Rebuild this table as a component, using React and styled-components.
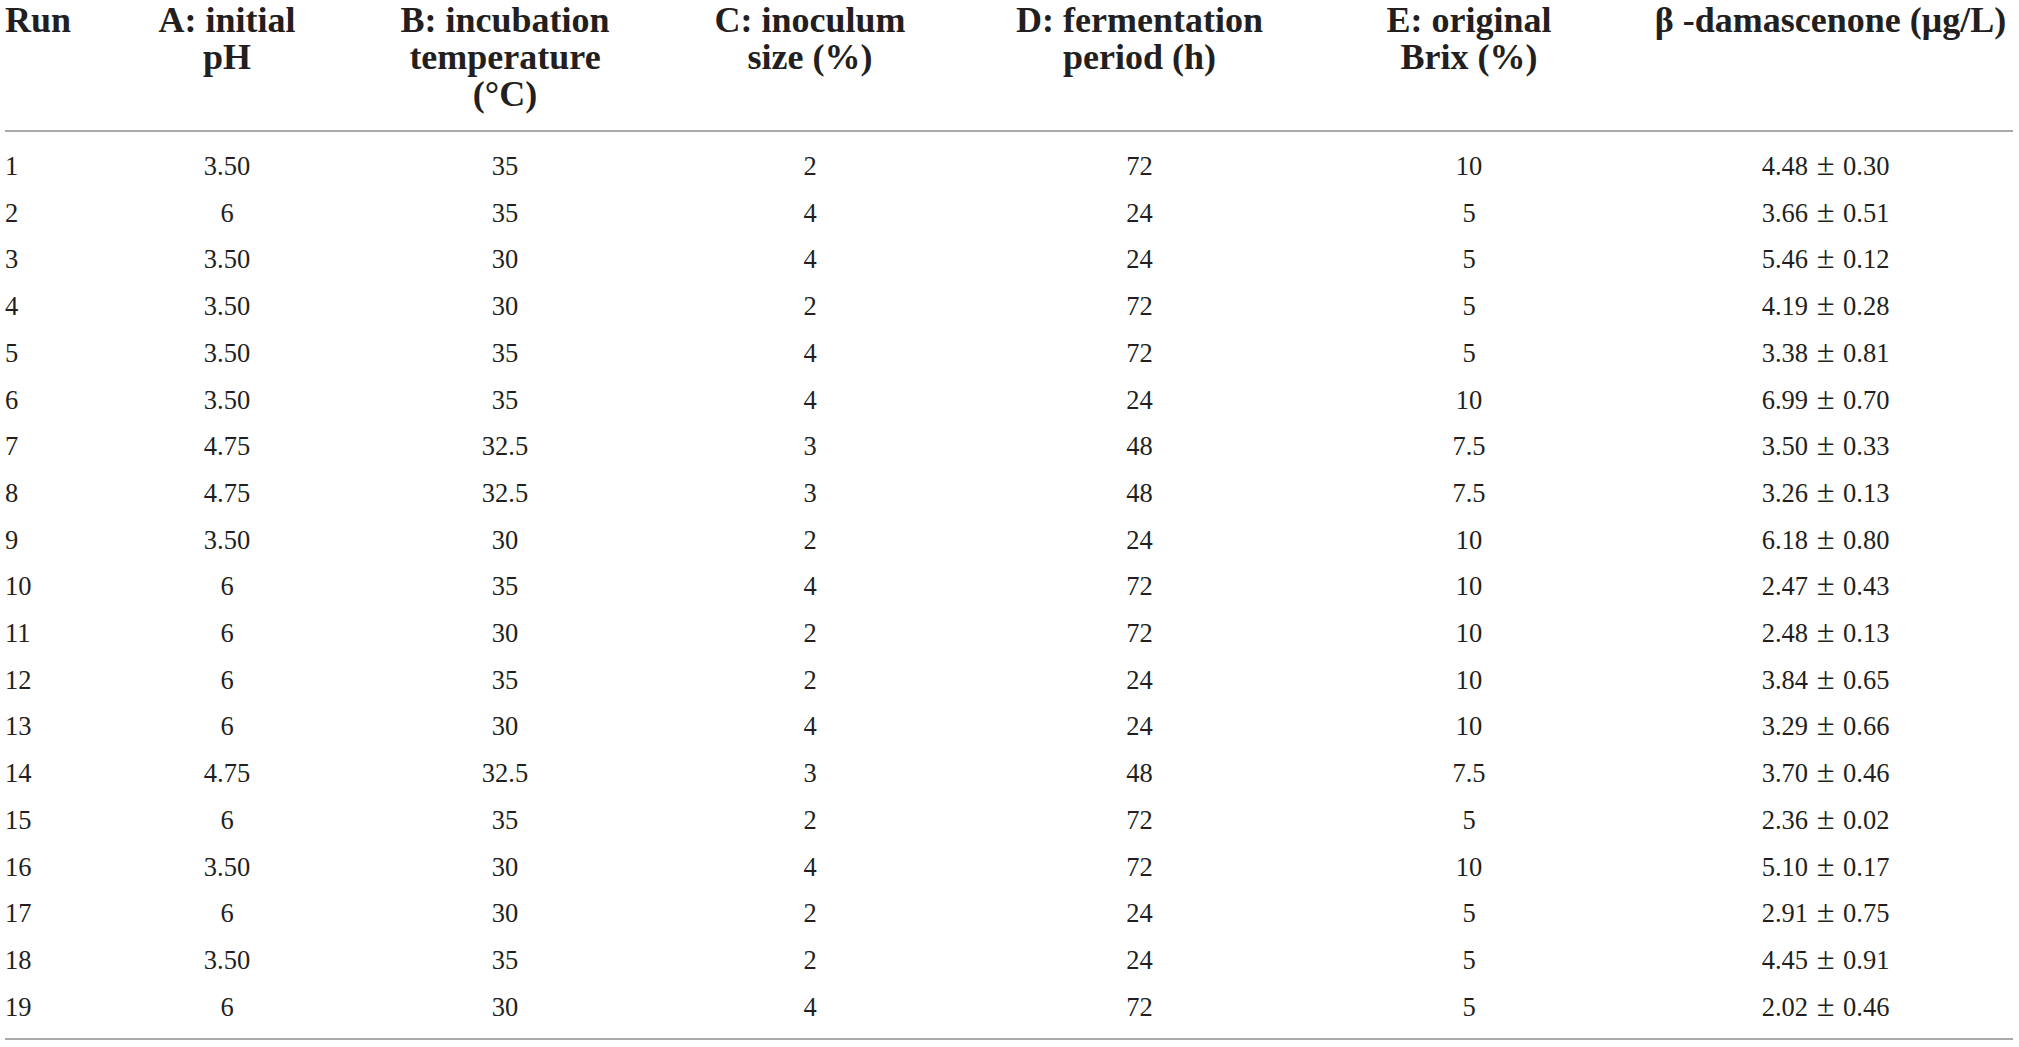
import React from "react";
import styled, { createGlobalStyle } from "styled-components";

const Global = createGlobalStyle`
  html, body { margin: 0; padding: 0; background: #ffffff; }
  body { font-family: "Liberation Serif", "Times New Roman", serif; color: #231f20; }
`;

const Page = styled.div`
  padding: 0 6px 0 5px;
`;

const Table = styled.table`
  width: 2008px;
  border-collapse: collapse;
  table-layout: fixed;
`;

const Col = styled.col`
  width: ${(p) => p.$w}px;
`;

const Head = styled.thead`
  border-bottom: 2px solid #a9a9a9;
`;

const HeadCell = styled.th`
  font-weight: 700;
  font-size: 36px;
  line-height: 37px;
  vertical-align: top;
  text-align: ${(p) => p.$align || "center"};
  padding: 2px ${(p) => p.$pr || 0}px 17px ${(p) => p.$pl || 0}px;
  white-space: nowrap;
`;

const Spacer = styled.tr`
  height: ${(p) => p.$h}px;
`;

const Row = styled.tr`
  height: 46.7px;
`;

const Cell = styled.td`
  font-size: 26.5px;
  line-height: 46.7px;
  word-spacing: 2px;
  padding: 0 ${(p) => p.$pr || 0}px 0 ${(p) => p.$pl || 0}px;
  text-align: ${(p) => p.$align || "center"};
  white-space: nowrap;
`;

const PlusMinus = styled.span`
  font-size: 1.22em;
  line-height: 0;
`;

const FootLine = styled.td`
  border-top: 2px solid #a9a9a9;
  padding: 0;
  height: 0;
`;

const cols = [
  { w: 83, align: "left", pl: 0, pr: 0 },
  { w: 278, pl: 0, pr: 0 },
  { w: 291, pl: 0, pr: 13 },
  { w: 318, pl: 0, pr: 12 },
  { w: 329, pl: 0, pr: 0 },
  { w: 346, pl: 0, pr: 16 },
  { w: 363, pl: 0, pr: 12, headPr: 2 },
];

const headers = [
  ["Run"],
  ["A: initial", "pH"],
  ["B: incubation", "temperature", "(°C)"],
  ["C: inoculum", "size (%)"],
  ["D: fermentation", "period (h)"],
  ["E: original", "Brix (%)"],
  ["β -damascenone (μg/L)"],
];

const rows = [
  ["1", "3.50", "35", "2", "72", "10", "4.48 ± 0.30"],
  ["2", "6", "35", "4", "24", "5", "3.66 ± 0.51"],
  ["3", "3.50", "30", "4", "24", "5", "5.46 ± 0.12"],
  ["4", "3.50", "30", "2", "72", "5", "4.19 ± 0.28"],
  ["5", "3.50", "35", "4", "72", "5", "3.38 ± 0.81"],
  ["6", "3.50", "35", "4", "24", "10", "6.99 ± 0.70"],
  ["7", "4.75", "32.5", "3", "48", "7.5", "3.50 ± 0.33"],
  ["8", "4.75", "32.5", "3", "48", "7.5", "3.26 ± 0.13"],
  ["9", "3.50", "30", "2", "24", "10", "6.18 ± 0.80"],
  ["10", "6", "35", "4", "72", "10", "2.47 ± 0.43"],
  ["11", "6", "30", "2", "72", "10", "2.48 ± 0.13"],
  ["12", "6", "35", "2", "24", "10", "3.84 ± 0.65"],
  ["13", "6", "30", "4", "24", "10", "3.29 ± 0.66"],
  ["14", "4.75", "32.5", "3", "48", "7.5", "3.70 ± 0.46"],
  ["15", "6", "35", "2", "72", "5", "2.36 ± 0.02"],
  ["16", "3.50", "30", "4", "72", "10", "5.10 ± 0.17"],
  ["17", "6", "30", "2", "24", "5", "2.91 ± 0.75"],
  ["18", "3.50", "35", "2", "24", "5", "4.45 ± 0.91"],
  ["19", "6", "30", "4", "72", "5", "2.02 ± 0.46"],
];

function renderValue(v) {
  const parts = v.split(" ± ");
  if (parts.length !== 2) return v;
  return (
    <>
      {parts[0]} <PlusMinus>±</PlusMinus> {parts[1]}
    </>
  );
}

export default function App() {
  return (
    <Page>
      <Global />
      <Table>
        <colgroup>
          {cols.map((c, i) => (
            <Col key={i} $w={c.w} />
          ))}
        </colgroup>
        <Head>
          <tr>
            {headers.map((lines, i) => (
              <HeadCell
                key={i}
                $align={cols[i].align}
                $pl={cols[i].pl}
                $pr={cols[i].headPr ?? cols[i].pr}
              >
                {lines.map((l, j) => (
                  <React.Fragment key={j}>
                    {j > 0 && <br />}
                    {l}
                  </React.Fragment>
                ))}
              </HeadCell>
            ))}
          </tr>
        </Head>
        <tbody>
          <Spacer $h={12} />
          {rows.map((r, i) => (
            <Row key={i}>
              {r.map((v, j) => (
                <Cell key={j} $align={cols[j].align} $pl={cols[j].pl} $pr={cols[j].pr}>
                  {renderValue(v)}
                </Cell>
              ))}
            </Row>
          ))}
          <Spacer $h={9} />
        </tbody>
        <tfoot>
          <tr>
            <FootLine colSpan={7} />
          </tr>
        </tfoot>
      </Table>
    </Page>
  );
}
